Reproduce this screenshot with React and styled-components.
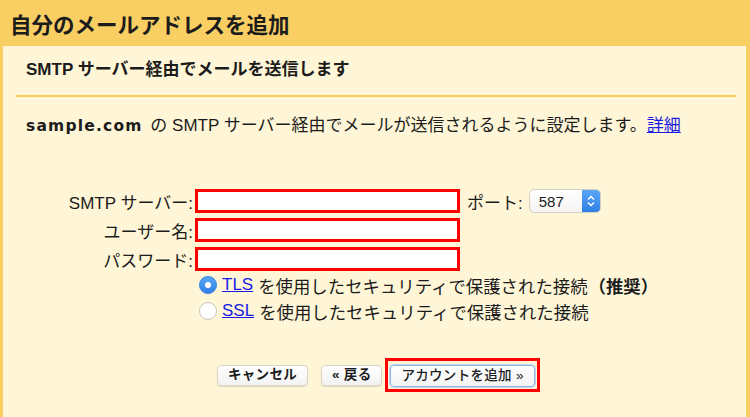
import React from "react";
import styled, { createGlobalStyle } from "styled-components";

const GlobalStyle = createGlobalStyle`
  html, body {
    margin: 0;
    padding: 0;
    background: #f9cf64;
  }
  body {
    font-family: "Liberation Sans", "Noto Sans CJK JP", sans-serif;
    color: #222;
  }
`;

const Frame = styled.div`
  width: 750px;
  height: 417px;
  box-sizing: border-box;
  background: #f9cf64;
  padding: 0 4px 0 3px;
  display: flex;
  flex-direction: column;
  overflow: hidden;
`;

const Header = styled.h1`
  margin: 0;
  height: 46px;
  display: flex;
  align-items: center;
  padding-left: 7px;
  font-size: 21.5px;
  font-weight: bold;
  color: #1c1c1c;
  font-family: "Noto Sans CJK JP", sans-serif;
`;

const Panel = styled.div`
  flex: 1;
  background: #fff6d7;
  padding: 14px 10px 0 13px;
  font-size: 17px;
`;

const SubTitle = styled.h2`
  margin: 0;
  padding-left: 10px;
  line-height: 20px;
  font-size: 17px;
  font-weight: bold;
  color: #1c1c1c;
  font-family: "Liberation Sans", "Noto Sans CJK JP", sans-serif;
`;

const Rule = styled.hr`
  margin: 15px 0 0;
  border: 0;
  height: 2px;
  background: #f6cc5e;
`;

const Description = styled.p`
  margin: 18px 0 0 10px;
  line-height: 22px;
  font-size: 17px;
  color: #1c1c1c;
  white-space: nowrap;
`;

const Domain = styled.span`
  font-family: "DejaVu Sans", sans-serif;
  font-weight: bold;
  font-size: 15.5px;
  letter-spacing: 1.2px;
  margin-right: 3px;
`;

const Link = styled.a`
  color: #1a1ae6;
  text-decoration: underline;
  cursor: pointer;
`;

const Form = styled.div`
  margin: 52px 0 0 -13px;
  display: flex;
  flex-direction: column;
  gap: 5px;
`;

const FieldRow = styled.div`
  display: flex;
  align-items: center;
  height: 24px;
`;

const Label = styled.label`
  width: 190px;
  text-align: right;
  font-size: 17px;
  color: #1c1c1c;
  flex-shrink: 0;
  white-space: nowrap;
`;

const TextInput = styled.input`
  margin-left: 2px;
  width: 265px;
  height: 24px;
  box-sizing: border-box;
  border: 3px solid #f00;
  background: #fff;
  outline: none;
  padding: 0 4px;
`;

const PortLabel = styled.span`
  margin-left: 7px;
  font-size: 17px;
  color: #1c1c1c;
  white-space: nowrap;
`;

const Select = styled.div`
  margin-left: 6px;
  width: 72px;
  height: 24px;
  box-sizing: border-box;
  border: 1px solid #d4d0c4;
  border-radius: 5px;
  background: linear-gradient(#ffffff, #f4f4f4);
  display: flex;
  align-items: center;
  overflow: hidden;
  font-size: 15px;
  color: #1c1c1c;
`;

const SelectValue = styled.span`
  flex: 1;
  padding-left: 9px;
`;

const Stepper = styled.span`
  width: 18px;
  height: 100%;
  background: linear-gradient(#5aa6f7, #2f7fe6);
  display: flex;
  align-items: center;
  justify-content: center;
`;

const Options = styled.div`
  margin-top: 4px;
  padding-left: 183px;
  display: flex;
  flex-direction: column;
  gap: 6px;
`;

const OptionRow = styled.div`
  display: flex;
  align-items: center;
  height: 20px;
  font-family: "Noto Sans CJK JP", sans-serif;
  font-size: 17.4px;
  color: #1c1c1c;
  white-space: pre;
`;

const Radio = styled.span`
  width: 18px;
  height: 18px;
  box-sizing: border-box;
  border-radius: 50%;
  margin-right: 5px;
  flex-shrink: 0;
  display: flex;
  align-items: center;
  justify-content: center;
  background: ${p => (p.checked ? "linear-gradient(#5aa8f8, #2e7ee6)" : "#fff")};
  border: 1px solid ${p => (p.checked ? "#2e7ee6" : "#c9c6bd")};
  &::after {
    content: "";
    width: 6px;
    height: 6px;
    border-radius: 50%;
    background: #fff;
    display: ${p => (p.checked ? "block" : "none")};
  }
`;

const ProtoLink = styled(Link)`
  font-family: "Liberation Sans", sans-serif;
  font-size: 17px;
  margin-right: 5px;
`;

const Strong = styled.b`
  font-weight: bold;
  margin-left: 1px;
`;

const Buttons = styled.div`
  margin-top: 37px;
  padding-left: 201px;
  display: flex;
  align-items: center;
`;

const Button = styled.button`
  height: 21px;
  box-sizing: border-box;
  padding: 0 ${p => p.pad || 10}px;
  margin-right: ${p => p.gap || 0}px;
  border: 1px solid #d8d4c8;
  border-radius: 4px;
  background: linear-gradient(#ffffff, #f3f3f3);
  box-shadow: 0 1px 1px rgba(0, 0, 0, 0.12);
  font-family: "Liberation Sans", "Noto Sans CJK JP", sans-serif;
  font-weight: bold;
  font-size: 13.5px;
  letter-spacing: 0.3px;
  color: #1c1c1c;
  line-height: 1;
  white-space: nowrap;
  cursor: pointer;
`;

const Highlight = styled.span`
  display: inline-flex;
  padding: 4px 2px 2px 2px;
  border: 3px solid #f00;
`;

const PrimaryButton = styled(Button)`
  height: 22px;
  border-color: #8fb8e6;
  box-shadow: 0 0 0 1px #bcd6f2;
  font-weight: 500;
`;

function StepperIcon() {
  return (
    <svg width="8" height="14" viewBox="0 0 8 14">
      <path d="M1 5.5 L4 2.5 L7 5.5" fill="none" stroke="#fff" strokeWidth="1.5" />
      <path d="M1 8.5 L4 11.5 L7 8.5" fill="none" stroke="#fff" strokeWidth="1.5" />
    </svg>
  );
}

export default function App() {
  return (
    <Frame>
      <GlobalStyle />
      <Header>自分のメールアドレスを追加</Header>
      <Panel>
        <SubTitle>SMTP サーバー経由でメールを送信します</SubTitle>
        <Rule />
        <Description>
          <Domain>sample.com</Domain> の SMTP サーバー経由でメールが送信されるように設定します。
          <Link>詳細</Link>
        </Description>
        <Form>
          <FieldRow>
            <Label>SMTP サーバー:</Label>
            <TextInput />
            <PortLabel>ポート:</PortLabel>
            <Select>
              <SelectValue>587</SelectValue>
              <Stepper>
                <StepperIcon />
              </Stepper>
            </Select>
          </FieldRow>
          <FieldRow>
            <Label>ユーザー名:</Label>
            <TextInput />
          </FieldRow>
          <FieldRow>
            <Label>パスワード:</Label>
            <TextInput type="password" />
          </FieldRow>
        </Form>
        <Options>
          <OptionRow>
            <Radio checked />
            <ProtoLink>TLS</ProtoLink>
            を使用したセキュリティで保護された接続<Strong>（推奨）</Strong>
          </OptionRow>
          <OptionRow>
            <Radio />
            <ProtoLink>SSL</ProtoLink>
            を使用したセキュリティで保護された接続
          </OptionRow>
        </Options>
        <Buttons>
          <Button pad={10} gap={13}>キャンセル</Button>
          <Button pad={10} gap={3}>« 戻る</Button>
          <Highlight>
            <PrimaryButton pad={10}>アカウントを追加 »</PrimaryButton>
          </Highlight>
        </Buttons>
      </Panel>
    </Frame>
  );
}
